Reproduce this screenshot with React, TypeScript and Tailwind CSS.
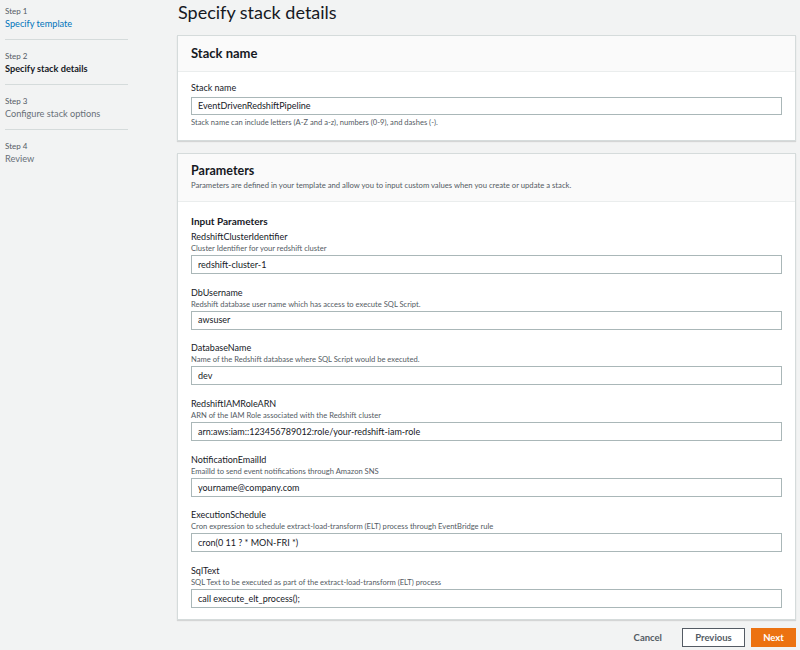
import React from "react";

const fields = [
  { label: "RedshiftClusterIdentifier", desc: "Cluster Identifier for your redshift cluster", value: "redshift-cluster-1" },
  { label: "DbUsername", desc: "Redshift database user name which has access to execute SQL Script.", value: "awsuser" },
  { label: "DatabaseName", desc: "Name of the Redshift database where SQL Script would be executed.", value: "dev" },
  { label: "RedshiftIAMRoleARN", desc: "ARN of the IAM Role associated with the Redshift cluster", value: "arn:aws:iam::123456789012:role/your-redshift-iam-role" },
  { label: "NotificationEmailId", desc: "EmailId to send event notifications through Amazon SNS", value: "yourname@company.com" },
  { label: "ExecutionSchedule", desc: "Cron expression to schedule extract-load-transform (ELT) process through EventBridge rule", value: "cron(0 11 ? * MON-FRI *)" },
  { label: "SqlText", desc: "SQL Text to be executed as part of the extract-load-transform (ELT) process", value: "call execute_elt_process();" },
];

function Input({ value, h = "h-[19px]" }: { value: string; h?: string }) {
  return (
    <div className={`${h} border border-[#aab7b8] bg-white flex items-center px-[6px] text-[9px] text-[#16191f]`}>
      {value}
    </div>
  );
}

export default function App() {
  return (
    <div
      className="w-[800px] h-[650px] bg-[#f2f3f3] flex text-[#16191f]"
      style={{ fontFamily: 'Lato, "Open Sans", sans-serif' }}
    >
      <aside className="w-[177px] shrink-0 pl-[5px] pt-[5px]">
        <div className="w-[123px]">
          <div className="pb-[8px] border-b border-[#d5dbdb]">
            <div className="text-[8px] leading-[12px] text-[#545b64]">Step 1</div>
            <div className="text-[9.2px] leading-[14px] text-[#0073bb]">Specify template</div>
          </div>
          <div className="pt-[10px] pb-[8px] border-b border-[#d5dbdb]">
            <div className="text-[8px] leading-[12px] text-[#545b64]">Step 2</div>
            <div className="text-[9.2px] leading-[14px] font-bold text-[#16191f]">Specify stack details</div>
          </div>
          <div className="pt-[10px] pb-[8px] border-b border-[#d5dbdb]">
            <div className="text-[8px] leading-[12px] text-[#545b64]">Step 3</div>
            <div className="text-[9.2px] leading-[14px] text-[#687078]">Configure stack options</div>
          </div>
          <div className="pt-[10px]">
            <div className="text-[8px] leading-[12px] text-[#545b64]">Step 4</div>
            <div className="text-[9.2px] leading-[14px] text-[#687078]">Review</div>
          </div>
        </div>
      </aside>

      <main className="flex-1 pr-[4px] flex flex-col">
        <h1 className="text-[18px] leading-[25px] text-[#16191f] h-[35px] pl-[1px]">Specify stack details</h1>

        <section className="bg-white border border-[#d5dbdb] shadow-[0_1px_1px_rgba(0,0,0,0.12)]">
          <div className="h-[36px] bg-[#fafafa] border-b border-[#eaeded] flex items-center px-[13px]">
            <h2 className="text-[13px] font-bold">Stack name</h2>
          </div>
          <div className="px-[13px] pt-[10px] pb-[11px]">
            <div className="text-[9px] leading-[12px] mb-[3px]">Stack name</div>
            <Input value="EventDrivenRedshiftPipeline" h="h-[18px]" />
            <div className="text-[7.6px] leading-[14px] text-[#545b64]">
              Stack name can include letters (A-Z and a-z), numbers (0-9), and dashes (-).
            </div>
          </div>
        </section>

        <section className="mt-[12px] bg-white border border-[#d5dbdb] shadow-[0_1px_1px_rgba(0,0,0,0.12)]">
          <div className="h-[48px] bg-[#fafafa] border-b border-[#eaeded] px-[13px] pt-[9px]">
            <h2 className="text-[12.5px] leading-[16px] font-bold">Parameters</h2>
            <p className="text-[7.7px] leading-[12px] text-[#545b64]">
              Parameters are defined in your template and allow you to input custom values when you create or update a stack.
            </p>
          </div>
          <div className="px-[13px] pt-[13px] pb-[11px]">
            <div className="text-[10px] leading-[12px] font-bold mb-[4px]">Input Parameters</div>
            <div className="flex flex-col gap-[12.7px]">
              {fields.map((f) => (
                <div key={f.label}>
                  <div className="text-[9px] leading-[12px]">{f.label}</div>
                  <div className="text-[7.6px] leading-[10px] text-[#545b64] mb-[2px]">{f.desc}</div>
                  <Input value={f.value} />
                </div>
              ))}
            </div>
          </div>
        </section>

        <div className="mt-[8px] flex items-center justify-end gap-[6px]">
          <button className="text-[9.5px] font-bold text-[#545b64] px-[10px] h-[19px] mr-[4px]">Cancel</button>
          <button className="text-[9.5px] font-bold text-[#545b64] border border-[#545b64] bg-white h-[19px] w-[63px]">Previous</button>
          <button className="text-[9.5px] font-bold text-white bg-[#ec7211] border border-[#ec7211] h-[19px] w-[45px]">Next</button>
        </div>
      </main>
    </div>
  );
}
